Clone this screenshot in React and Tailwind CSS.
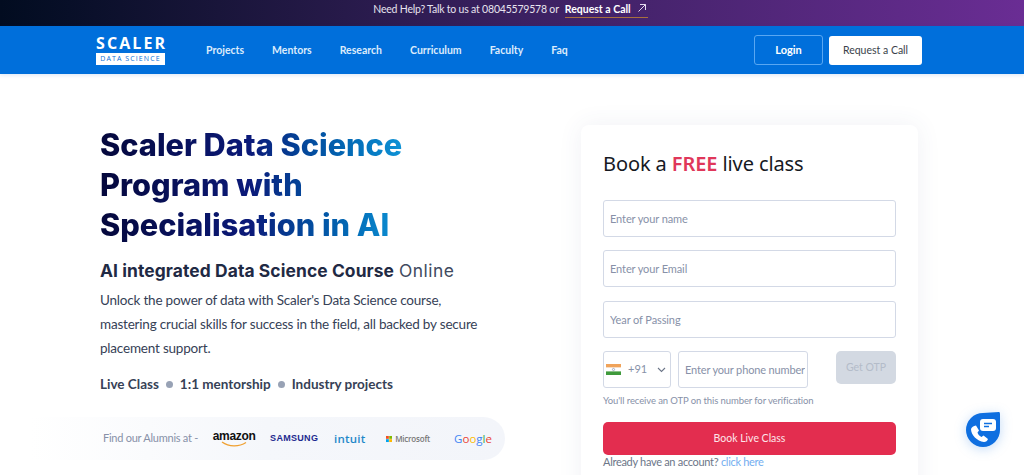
import React from 'react';

const NAV_LINKS = ['Projects', 'Mentors', 'Research', 'Curriculum', 'Faculty', 'Faq'];

const BODY = "font-['Lato','Noto_Sans',sans-serif]";
const HEAD = "font-['Inter','Open_Sans',sans-serif]";

function ArrowUpRight() {
  return (
    <svg width="10" height="10" viewBox="0 0 10 10" fill="none" stroke="#e4d9ee" strokeWidth="1">
      <path d="M1.5 8.5 L8.5 1.5 M3 1.5 H8.5 V7" />
    </svg>
  );
}

function Logo() {
  return (
    <div className="flex w-[69px] flex-col text-white">
      <span className="text-[16px] leading-[16px] font-bold tracking-[2.1px] font-['Open_Sans',sans-serif]">SCALER</span>
      <span className="mt-[2px] flex h-[12px] items-center justify-center bg-white text-[7px] tracking-[1.1px] text-[#0a6fd8] font-['Open_Sans',sans-serif]">
        DATA SCIENCE
      </span>
    </div>
  );
}

function Flag() {
  return (
    <svg width="15" height="11" viewBox="0 0 15 11">
      <rect width="15" height="3.6" fill="#f0a35a" />
      <rect y="3.6" width="15" height="3.8" fill="#ffffff" />
      <rect y="7.4" width="15" height="3.6" fill="#3f9a3c" />
      <circle cx="7.5" cy="5.5" r="1.1" fill="none" stroke="#5a6a9a" strokeWidth="0.5" />
    </svg>
  );
}

function Brands() {
  return (
    <div className="flex items-center whitespace-nowrap">
      <div className="ml-[15px] flex w-[42px] flex-col items-center">
        <span className="text-[12px] leading-[12px] font-bold tracking-[-0.3px] text-[#111] font-['Liberation_Sans',sans-serif]">amazon</span>
        <svg className="-mt-[1px]" width="26" height="6" viewBox="0 0 26 6" fill="none" stroke="#f0a030" strokeWidth="1.3">
          <path d="M1 1 C8 6 18 6 25 1.5" />
        </svg>
      </div>
      <span className="ml-[15px] w-[47px] text-[9px] font-bold tracking-[0.3px] text-[#1d2a8f] font-['Liberation_Sans',sans-serif]">SAMSUNG</span>
      <span className="ml-[17px] w-[31px] text-[11.5px] font-semibold tracking-[0.2px] text-[#1f88c9] font-['Open_Sans',sans-serif]">intuit</span>
      <div className="ml-[21px] flex w-[44px] items-center gap-[3px]">
        <svg width="10" height="10" viewBox="0 0 10 10">
          <rect width="4.7" height="4.7" fill="#f25022" />
          <rect x="5.3" width="4.7" height="4.7" fill="#7fba00" />
          <rect y="5.3" width="4.7" height="4.7" fill="#00a4ef" />
          <rect x="5.3" y="5.3" width="4.7" height="4.7" fill="#ffb900" />
        </svg>
        <span className="text-[8px] font-semibold tracking-[-0.2px] text-[#777] font-['Open_Sans',sans-serif]">Microsoft</span>
      </div>
      <span className="ml-[24px] text-[11.5px] font-['Open_Sans',sans-serif]">
        <span className="text-[#4285f4]">G</span>
        <span className="text-[#ea4335]">o</span>
        <span className="text-[#fbbc05]">o</span>
        <span className="text-[#4285f4]">g</span>
        <span className="text-[#34a853]">l</span>
        <span className="text-[#ea4335]">e</span>
      </span>
    </div>
  );
}

function Field({ placeholder }) {
  return (
    <input
      placeholder={placeholder}
      className="h-[37px] w-full rounded-[3px] border border-[#d3d9e6] bg-white px-[6px] text-[11px] tracking-[-0.1px] placeholder:text-[#8791a8]"
    />
  );
}

export default function App() {
  return (
    <div className={`relative h-[475px] w-[1024px] overflow-hidden bg-white ${BODY}`}>
      {/* top strip */}
      <div className="flex h-[26px] items-center justify-center gap-[5px] bg-linear-to-r from-[#020c20] via-[#3a2060] to-[#6a2d94] pb-[8px] pr-[3px] pt-[1px] text-[10.5px] tracking-[-0.2px] text-[#e7e3ee]">
        <span>Need Help? Talk to us at 08045579578 or</span>
        <span className="relative ml-[1px] border-b border-[#a8703e] pr-[17px] text-[10.5px] leading-[16px] font-bold tracking-normal text-white">
          Request a Call
          <span className="absolute right-[1px] top-[2px]"><ArrowUpRight /></span>
        </span>
      </div>

      {/* nav */}
      <div className="flex h-[48px] items-center bg-[#006fdb] pl-[96px] pr-[102px] shadow-[0_1px_4px_rgba(0,80,180,0.15)]">
        <Logo />
        <div className="ml-[41px] flex gap-[28px] pt-[1px] text-[10.5px] font-bold text-[#dcebfb]">
          {NAV_LINKS.map((l) => (
            <span key={l}>{l}</span>
          ))}
        </div>
        <div className="ml-auto flex items-center gap-[6px]">
          <button className="h-[30px] w-[69px] rounded-[3px] border border-[#59a7f2] text-[11px] font-bold text-white">Login</button>
          <button className="h-[29px] w-[93px] rounded-[3px] bg-white pt-[1px] text-[10.5px] text-[#3a3f4a]">Request a Call</button>
        </div>
      </div>

      {/* main */}
      <div className="flex pl-[100px] pt-[51px]">
        <div className="w-[481px] shrink-0">
          <h1 className={`w-[302px] whitespace-nowrap bg-linear-to-r from-[#05083c] via-[#0b1a7a] to-[#0f93d6] bg-clip-text text-[30.7px] leading-[40px] font-extrabold text-transparent ${HEAD}`}>
            Scaler Data Science<br />Program with<br />Specialisation in AI
          </h1>
          <h2 className={`mt-[14px] whitespace-nowrap text-[17.4px] leading-[24px] text-[#1f2a44] ${HEAD}`}>
            <span className="font-bold tracking-[0.1px]">AI integrated Data Science Course</span> <span className="font-normal tracking-[0.5px] text-[#404a60]">Online</span>
          </h2>
          <p className="mt-[5px] w-[390px] text-[13.5px] leading-[24px] tracking-[-0.2px] text-[#364156]">
            Unlock the power of data with Scaler's Data Science course, mastering crucial skills for success in the field, all backed by secure placement support.
          </p>
          <div className="mt-[12px] flex items-center text-[13.5px] leading-[24px] font-bold text-[#364156]">
            <span>Live Class</span>
            <span className="mx-[7px] h-[7px] w-[7px] rounded-full bg-[#98a2b5]" />
            <span>1:1 mentorship</span>
            <span className="mx-[7px] h-[7px] w-[7px] rounded-full bg-[#98a2b5]" />
            <span>Industry projects</span>
          </div>
          <div className="-ml-[70px] mt-[21px] flex h-[43px] w-[475px] items-center rounded-r-[22px] bg-linear-to-r from-white via-[#f5f7fb] to-[#f3f5fa] pl-[73px]">
            <span className="whitespace-nowrap text-[11px] tracking-[-0.25px] text-[#8791a8]">Find our Alumnis at -</span>
            <Brands />
          </div>
        </div>

        {/* form card */}
        <div className="h-[400px] w-[337px] rounded-[8px] bg-white px-[22px] pt-[24px] shadow-[0_0_24px_rgba(60,80,130,0.08)]">
          <h3 className="text-[20px] leading-[30px] tracking-[-0.1px] text-[#16191f] font-['Noto_Sans',sans-serif]">
            Book a <span className="font-semibold text-[#e0375a]">FREE</span> live class
          </h3>
          <div className="mt-[21px] flex flex-col gap-[13px]">
            <Field placeholder="Enter your name" />
            <Field placeholder="Enter your Email" />
            <div className="pt-[1px]">
              <Field placeholder="Year of Passing" />
            </div>
          </div>
          <div className="mt-[13px] flex items-start">
            <div className="flex h-[37px] w-[68px] items-center rounded-[3px] border border-[#d3d9e6] pl-[2px] text-[11px] text-[#8791a8]">
              <Flag />
              <span className="ml-[7px]">+91</span>
              <svg className="ml-[10px]" width="9" height="6" viewBox="0 0 9 6" fill="none" stroke="#6c7688" strokeWidth="1.1">
                <path d="M1 1 L4.5 4.5 L8 1" />
              </svg>
            </div>
            <input
              placeholder="Enter your phone number"
              className="ml-[7px] h-[37px] w-[130px] rounded-[3px] border border-[#d3d9e6] bg-white pl-[6px] pr-[2px] text-[11px] tracking-[-0.15px] placeholder:text-[#8791a8]"
            />
            <button className="ml-[28px] h-[33px] w-[60px] rounded-[5px] bg-[#d3d9e2] text-[10.5px] text-[#b4bcc9]">Get OTP</button>
          </div>
          <p className="mt-[6px] text-[9.5px] leading-[14px] tracking-[-0.1px] text-[#8791a8]">You'll receive an OTP on this number for verification</p>
          <button className="mt-[14px] h-[33px] w-full rounded-[5px] bg-[#e32d4f] text-[10.5px] text-[#fde6ea]">Book Live Class</button>
          <p className="text-[11px] leading-[14px] tracking-[-0.3px] text-[#6c7688]">
            Already have an account? <span className="text-[#73aef0]">click here</span>
          </p>
        </div>
      </div>

      {/* chat widget */}
      <div className="absolute left-[966px] top-[412px] drop-shadow-[0_2px_6px_rgba(15,111,224,0.25)]">
        <svg width="34" height="35" viewBox="0 0 34 35">
          <path d="M17 1 L33 0 Q34 0 34 2 V18 A17 17 0 1 1 17 1 Z" fill="#0f6fe0" />
          <rect x="14" y="7" width="16" height="12" rx="3" fill="#fff" />
          <path d="M18 11.5 H26 M18 14.5 H23" stroke="#0f6fe0" strokeWidth="1.3" />
          <path d="M5 17 C5 23 11 29 18 30 Q21 30 22 27 L17.5 23.5 L15.5 25 C13 24 12 22 11.5 20.5 L13 18.5 L10 13.5 Q6 14 5 17 Z" fill="#fff" />
        </svg>
      </div>
    </div>
  );
}
